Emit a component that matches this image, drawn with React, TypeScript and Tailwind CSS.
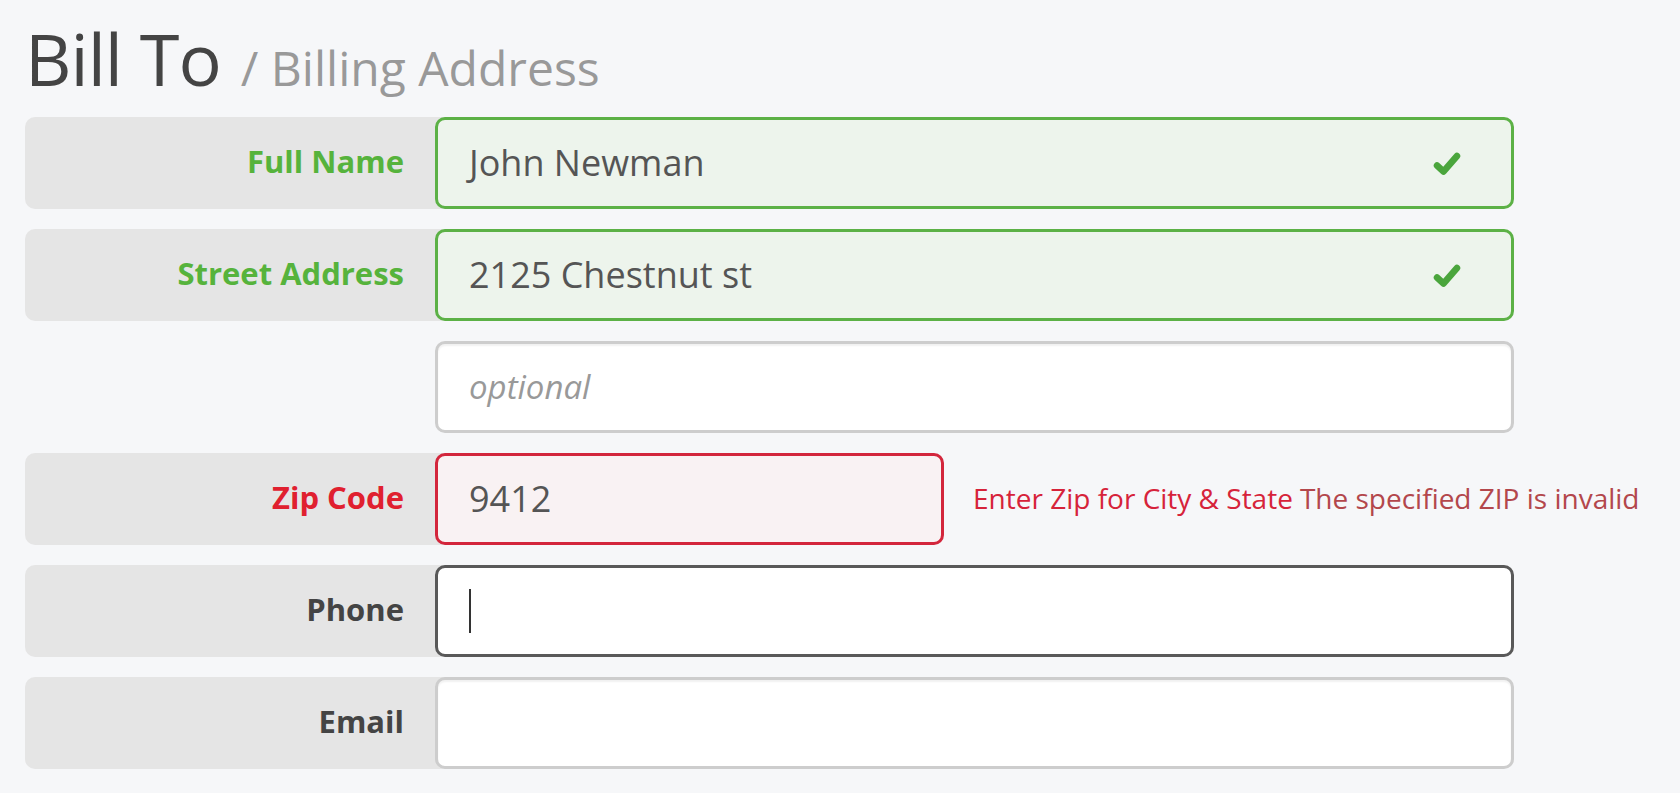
import { ReactNode } from "react";

type Status = "valid" | "error" | "focus" | "idle";

function Check() {
    return (
        <svg width="28" height="26" viewBox="0 0 28 26" className="shrink-0">
            <path
                d="M4 15.5 L10.5 21.5 L24 6"
                fill="none"
                stroke="#4aa53c"
                strokeWidth="6.5"
                strokeLinecap="round"
                strokeLinejoin="round"
            />
        </svg>
    );
}

const boxStyles: Record<Status, string> = {
    valid: "border-[#5cb146] bg-[#edf4ec]",
    error: "border-[#d3263c] bg-[#f9f2f3]",
    focus: "border-[#595959] bg-white",
    idle: "border-[#cdcdcd] bg-white shadow-[inset_0_2px_2px_rgba(0,0,0,0.06)]",
};

const labelStyles: Record<Status, string> = {
    valid: "text-[#56b33c]",
    error: "text-[#e0202f]",
    focus: "text-[#444]",
    idle: "text-[#444]",
};

function Field({
    label,
    status,
    value,
    placeholder,
    caret,
    narrow,
    aside,
}: {
    label?: string;
    status: Status;
    value?: string;
    placeholder?: string;
    caret?: boolean;
    narrow?: boolean;
    aside?: ReactNode;
}) {
    return (
        <div className="flex h-[92px] items-stretch">
            {label ? (
                <div className="flex w-[420px] shrink-0 items-center justify-end rounded-l-[10px] bg-[#e5e5e5] pb-[4px] pr-[41px]">
                    <span className={`text-[31px] font-bold ${labelStyles[status]}`}>{label}</span>
                </div>
            ) : (
                <div className="w-[420px] shrink-0" />
            )}
            <div
                className={`relative -ml-[10px] flex items-center rounded-[10px] border-[3px] pl-[31px] pr-[50px] ${
                    narrow ? "w-[509px]" : "w-[1079px]"
                } ${boxStyles[status]}`}
            >
                {caret && <span className="h-[44px] w-[2px] bg-[#333]" />}
                {value && <span className="flex-1 text-[36px] text-[#555]">{value}</span>}
                {placeholder && <span className="flex-1 text-[33px] italic text-[#999]">{placeholder}</span>}
                {status === "valid" && <Check />}
            </div>
            {aside}
        </div>
    );
}

export default function App() {
    return (
        <div className="min-h-screen bg-[#f6f7f9] pl-[25px] pt-[22px] font-['Open_Sans',sans-serif]">
            <h1 className="mb-[23px] flex items-baseline gap-[20px] leading-none">
                <span className="text-[72px] tracking-[-1px] text-[#444]">Bill To</span>
                <span className="text-[48px] text-[#999]">/ Billing Address</span>
            </h1>

            <div className="flex flex-col gap-[20px]">
                <Field label="Full Name" status="valid" value="John Newman" />
                <Field label="Street Address" status="valid" value="2125 Chestnut st" />
                <Field status="idle" placeholder="optional" />
                <Field
                    label="Zip Code"
                    status="error"
                    value="9412"
                    narrow
                    aside={
                        <div className="flex items-center pb-[2px] pl-[29px] text-[28px] whitespace-nowrap">
                            <span className="text-[#d6233a]">Enter Zip for City &amp; State</span>
                            <span className="ml-[7px] text-[#b3474c]">The specified ZIP is invalid</span>
                        </div>
                    }
                />
                <Field label="Phone" status="focus" caret />
                <Field label="Email" status="idle" />
            </div>
        </div>
    );
}
